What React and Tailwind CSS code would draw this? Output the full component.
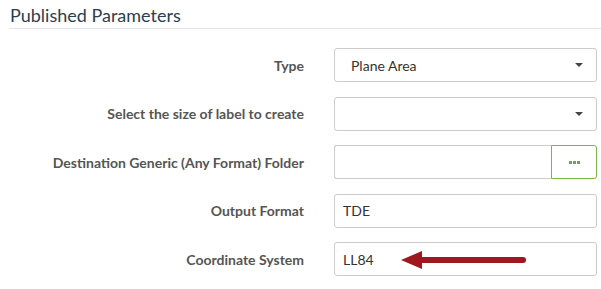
import React from 'react';

const Caret = () => (
  <svg className="w-[8px] h-[4px] text-[#444]" viewBox="0 0 8 4" fill="currentColor">
    <path d="M0 0h8L4 4z" />
  </svg>
);

const Row = ({ label, children }) => (
  <div className="flex items-center h-[34px]">
    <div className="w-[305px] pr-[1px] text-right text-[14px] font-bold text-[#555]">
      {label}
    </div>
    <div className="ml-[29px] w-[263px] h-full">{children}</div>
  </div>
);

const App = () => {
  return (
    <div
      className="w-[601px] h-[289px] bg-white"
      style={{ fontFamily: 'Lato, "Open Sans", sans-serif' }}
    >
      <div className="pl-[9px]">
        <h2 className="pt-[5px] pl-[1px] pb-[3px] text-[18px] leading-[20px] text-[#2c3e50] border-b border-[#e5e5e5]">
          Published Parameters
        </h2>
      </div>

      <div className="mt-[19px] flex flex-col gap-[14.5px]">
        <Row label="Type">
          <div className="h-full flex items-center justify-between border border-[#ccc] rounded-[3px] pl-[16px] pr-[13px] text-[14px] text-[#333]">
            <span>Plane Area</span>
            <Caret />
          </div>
        </Row>
        <Row label="Select the size of label to create">
          <div className="h-full flex items-center justify-end border border-[#ccc] rounded-[3px] pr-[13px]">
            <Caret />
          </div>
        </Row>
        <Row label="Destination Generic (Any Format) Folder">
          <div className="h-full flex">
            <div className="flex-1 border border-r-0 border-[#ccc] rounded-l-[3px]" />
            <div className="w-[46px] flex items-center justify-center gap-[1px] border border-[#7ab648] rounded-r-[3px]">
              <span className="w-[3px] h-[3px] bg-[#6aaa3a]" />
              <span className="w-[3px] h-[3px] bg-[#6aaa3a]" />
              <span className="w-[3px] h-[3px] bg-[#6aaa3a]" />
            </div>
          </div>
        </Row>
        <Row label="Output Format">
          <div className="h-full flex items-center border border-[#ccc] rounded-[3px] pl-[8px] text-[14px] text-[#333]">
            TDE
          </div>
        </Row>
        <Row label="Coordinate System">
          <div className="relative h-full flex items-center border border-[#ccc] rounded-[3px] pl-[8px] text-[14px] text-[#333]">
            LL84
            <svg
              className="absolute left-[66px] top-[7px] w-[126px] h-[20px]"
              viewBox="0 0 126 20"
            >
              <path d="M0 10L21 1V19z" fill="#a0181f" />
              <line x1="18" y1="10" x2="122" y2="10" stroke="#a0181f" strokeWidth="6" strokeLinecap="round" />
            </svg>
          </div>
        </Row>
      </div>
    </div>
  );
};

export default App;
